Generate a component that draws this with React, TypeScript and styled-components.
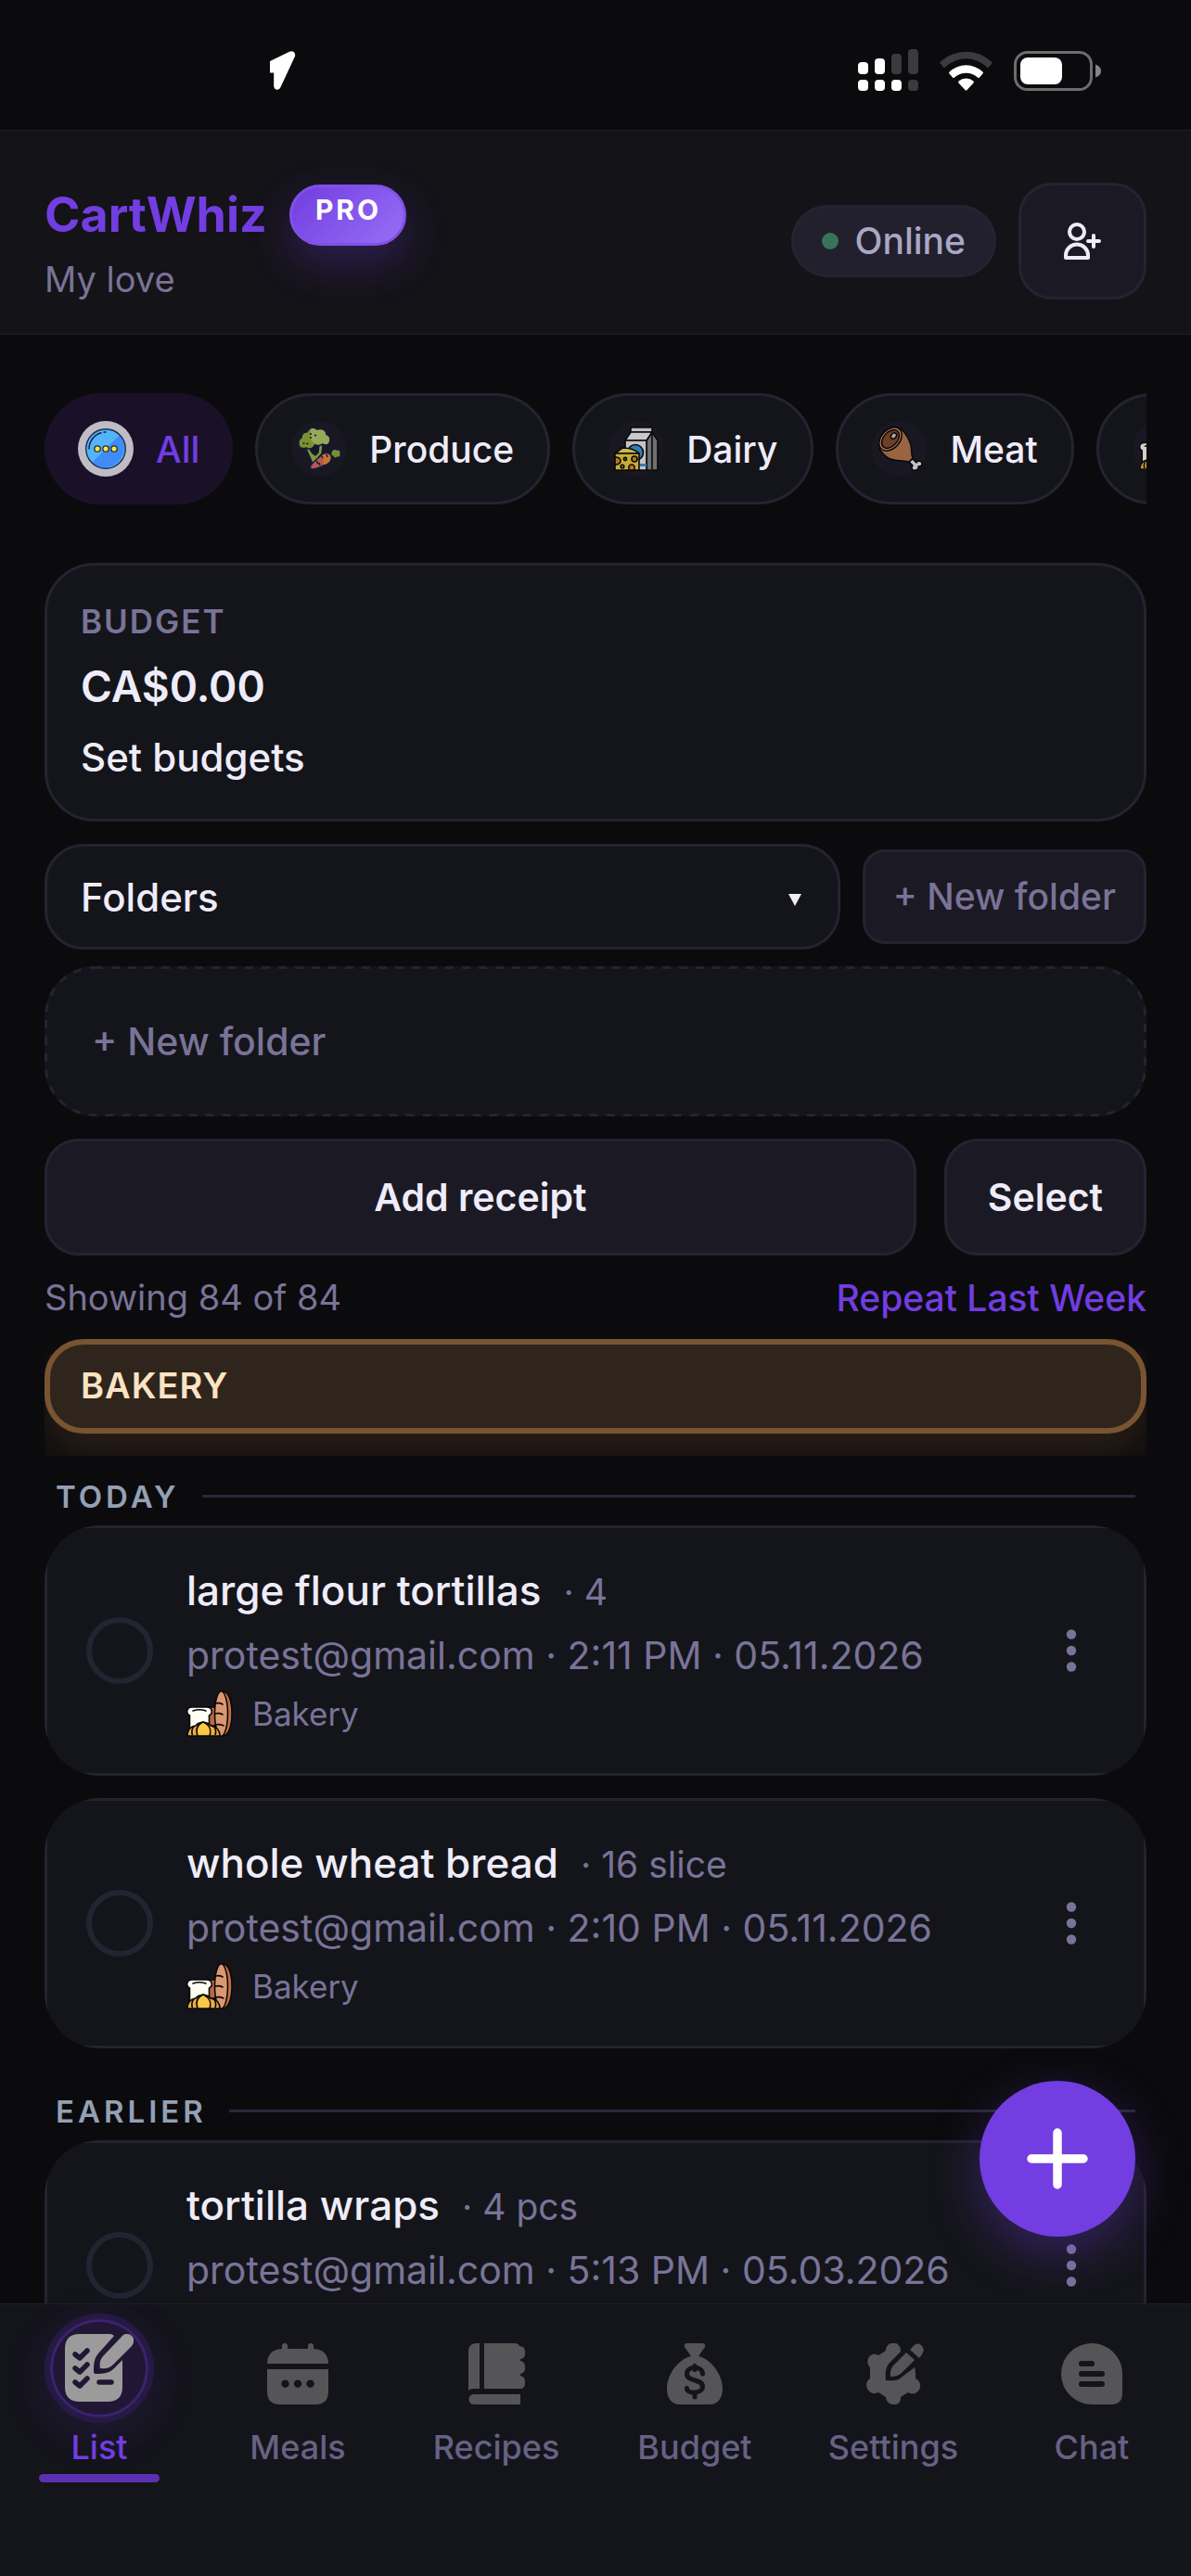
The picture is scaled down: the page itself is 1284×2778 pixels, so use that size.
import React, { useState } from "react";
import styled, { createGlobalStyle, css } from "styled-components";

const colors = {
	page: "#0b0b0d",
	header: "#141318",
	panel: "#14151a",
	raised: "#1b1a24",
	border: "#242331",
	hairline: "#1d1c29",
	text: "#efecf9",
	muted: "#7a7398",
	accent: "#723de1",
};

const GlobalStyle = createGlobalStyle`
	* {
		box-sizing: border-box;
	}
	body {
		margin: 0;
		background: ${colors.page};
		color: ${colors.text};
		font-family: Inter, "Liberation Sans", sans-serif;
		font-size: 40px;
	}
	button, select, input {
		margin: 0;
		color: inherit;
		font: inherit;
	}
	a {
		color: inherit;
		text-decoration: none;
	}
	svg {
		display: block;
		flex: none;
	}
`;

const Shell = styled.div`
	position: relative;
	display: flex;
	flex-direction: column;
	height: 100vh;
	overflow: hidden;
`;

const StatusBar = styled.div`
	display: flex;
	flex: none;
	align-items: center;
	justify-content: space-between;
	height: 140px;
	padding: 12px 96px 0 290px;
`;

const StatusIcons = styled.div`
	display: flex;
	align-items: center;
	gap: 23px;
`;

const Header = styled.header`
	display: flex;
	flex: none;
	align-items: center;
	justify-content: space-between;
	height: 221px;
	padding: 18px 48px 0;
	background: ${colors.header};
	border-top: 1px solid ${colors.hairline};
	border-bottom: 1px solid ${colors.hairline};
`;

const Brand = styled.div`
	display: flex;
	align-items: center;
	gap: 24px;
`;

const Title = styled.h1`
	margin: 0;
	color: ${colors.accent};
	font-size: 52px;
	font-weight: 700;
	line-height: 66px;
`;

const ProBadge = styled.span`
	height: 66px;
	padding: 6px 24px 0 25px;
	background: linear-gradient(135deg, #723de1, #966ff5);
	border: 3px solid #8051e8;
	border-radius: 33px;
	box-shadow: 0 18px 48px rgba(114, 61, 225, 0.3);
	color: #fff;
	font-size: 30px;
	font-weight: 700;
	letter-spacing: 3px;
	line-height: 36px;
`;

const ListName = styled.p`
	margin: 16px 0 0;
	color: ${colors.muted};
	font-size: 38px;
	line-height: 40px;
`;

const HeaderActions = styled.div`
	display: flex;
	align-items: center;
	gap: 24px;
`;

const OnlinePill = styled.div`
	display: flex;
	align-items: center;
	gap: 18px;
	height: 78px;
	padding: 0 30px;
	background: #21202c;
	border: 3px solid ${colors.border};
	border-radius: 39px;
	color: #aaa6c6;
	font-size: 39px;
	font-weight: 500;
`;

const OnlineDot = styled.span`
	width: 18px;
	height: 18px;
	background: #38735a;
	border-radius: 50%;
`;

const InviteButton = styled.button`
	display: flex;
	align-items: center;
	justify-content: center;
	width: 138px;
	height: 126px;
	padding: 0;
	background: ${colors.raised};
	border: 3px solid ${colors.border};
	border-radius: 36px;
`;

const Main = styled.main`
	display: flex;
	flex: 1;
	flex-direction: column;
	min-height: 0;
	overflow: hidden;
	padding: 63px 48px 0;

	> * {
		flex: none;
	}
`;

const Chips = styled.div`
	display: flex;
	gap: 24px;
	margin-bottom: 63px;
	overflow: hidden;
`;

const Chip = styled.button<{ $active: boolean }>`
	display: flex;
	flex: none;
	align-items: center;
	gap: 24px;
	height: 120px;
	padding: 0 36px;
	background: ${colors.panel};
	border: 3px solid ${colors.border};
	border-radius: 60px;
	font-size: 39px;
	font-weight: 500;

	${({ $active }) =>
		$active &&
		css`
			background: #1a1129;
			border: 0;
			color: ${colors.accent};
		`}
`;

const ChipIcon = styled.span<{ $active: boolean }>`
	display: flex;
	align-items: center;
	justify-content: center;
	width: 60px;
	height: 60px;
	background: ${({ $active }) => ($active ? "#c0bcc6" : "#191822")};
	border-radius: 50%;
`;

const BudgetCard = styled.section`
	height: 279px;
	margin-bottom: 24px;
	padding: 33px 36px;
	background: ${colors.panel};
	border: 3px solid ${colors.border};
	border-radius: 54px;
`;

const BudgetLabel = styled.h2`
	margin: 0;
	color: ${colors.muted};
	font-size: 35px;
	font-weight: 600;
	letter-spacing: 2px;
	line-height: 54px;
`;

const BudgetAmount = styled.p`
	margin: 0;
	font-size: 46px;
	font-weight: 600;
	line-height: 86px;
`;

const BudgetLink = styled.button`
	padding: 0;
	background: none;
	border: 0;
	font-size: 42px;
	font-weight: 500;
	line-height: 68px;
`;

const FolderRow = styled.div`
	display: flex;
	align-items: center;
	gap: 24px;
	margin-bottom: 18px;
`;

const FolderPicker = styled.label`
	position: relative;
	flex: 1;
`;

const FolderSelect = styled.select`
	display: block;
	width: 100%;
	height: 114px;
	padding: 0 36px;
	appearance: none;
	background: ${colors.panel};
	border: 3px solid ${colors.border};
	border-radius: 42px;
	font-size: 42px;
	font-weight: 500;
`;

const Caret = styled.span`
	position: absolute;
	top: 54px;
	right: 42px;
	border: solid transparent;
	border-width: 13px 7px 0;
	border-top-color: ${colors.text};
`;

const NewFolderButton = styled.button`
	height: 102px;
	padding: 0 30px 2px;
	background: ${colors.raised};
	border: 3px solid ${colors.border};
	border-radius: 24px;
	color: ${colors.muted};
	font-size: 39px;
	font-weight: 500;
`;

const NewFolderDrop = styled.button`
	position: relative;
	height: 162px;
	margin-bottom: 24px;
	padding: 0 51px;
	background: ${colors.panel};
	border: 0;
	border-radius: 54px;
	color: ${colors.muted};
	font-size: 41px;
	font-weight: 500;
	text-align: left;
`;

const DashedOutline = styled.svg`
	position: absolute;
	inset: 0;
	width: 100%;
	height: 100%;
	overflow: visible;
	fill: none;
	stroke: ${colors.border};
	stroke-width: 3px;
	stroke-dasharray: 9 9;

	rect {
		width: calc(100% - 3px);
		height: calc(100% - 3px);
	}
`;

const ActionRow = styled.div`
	display: flex;
	gap: 30px;
`;

const ActionButton = styled.button<{ $grow?: boolean }>`
	flex: ${({ $grow }) => ($grow ? "1" : "none")};
	height: 126px;
	padding: 0 44px;
	background: ${colors.raised};
	border: 3px solid ${colors.border};
	border-radius: 36px;
	font-size: 41px;
	font-weight: 600;
`;

const SummaryRow = styled.div`
	display: flex;
	align-items: center;
	justify-content: space-between;
	height: 90px;
	color: ${colors.muted};
	font-size: 38px;
`;

const RepeatButton = styled.button`
	padding: 0;
	background: none;
	border: 0;
	color: ${colors.accent};
	font-size: 39px;
	font-weight: 500;
`;

// The glow under the heading is cut off at the edges of this strip
const CategoryStrip = styled.div`
	overflow: hidden;
	padding-bottom: 24px;
`;

const CategoryHeading = styled.h2`
	margin: 0;
	padding: 0 33px 2px;
	background: #30251c;
	border: 6px solid #785530;
	border-radius: 42px;
	box-shadow: 0 24px 48px rgba(120, 80, 50, 0.3);
	color: #fbe3c3;
	font-size: 38px;
	font-weight: 600;
	letter-spacing: 1px;
	line-height: 88px;
`;

const DayHeading = styled.h3`
	display: flex;
	align-items: center;
	gap: 24px;
	height: 63px;
	margin: 12px 12px 0;
	color: #94a0b4;
	font-size: 33px;
	font-weight: 600;
	letter-spacing: 4px;

	&::after {
		content: "";
		flex: 1;
		height: 3px;
		background: #252a38;
	}
`;

const Items = styled.ul`
	margin: 0;
	padding: 0;
	list-style: none;
`;

const ItemClip = styled.li`
	margin-bottom: 24px;
	overflow: hidden;
	border-radius: 60px;
`;

const ItemCard = styled.div`
	display: flex;
	align-items: center;
	gap: 36px;
	height: 270px;
	padding: 0 42px;
	background: ${colors.panel};
	border: 3px solid ${colors.border};
	border-radius: 42px;
`;

const Tick = styled.input`
	flex: none;
	width: 72px;
	height: 72px;
	appearance: none;
	border: 6px solid ${colors.border};
	border-radius: 50%;

	&:checked {
		background: ${colors.accent};
	}
`;

const ItemBody = styled.div`
	flex: 1;
	padding-bottom: 2px;
	color: ${colors.muted};
	white-space: nowrap;
`;

const ItemTitle = styled.div`
	display: flex;
	align-items: baseline;
	gap: 24px;
	font-size: 39px;
	line-height: 62px;
`;

const ItemName = styled.span`
	color: ${colors.text};
	font-size: 44px;
	font-weight: 500;
`;

const ItemMeta = styled.div`
	font-size: 41px;
	line-height: 74px;
`;

const ItemCategory = styled.div`
	display: flex;
	align-items: center;
	gap: 21px;
	font-size: 35px;
	line-height: 52px;
`;

const MoreButton = styled.button`
	display: flex;
	align-items: center;
	justify-content: center;
	flex: none;
	width: 72px;
	height: 72px;
	padding: 0;
	background: none;
	border: 0;
`;

const Nav = styled.nav`
	display: grid;
	flex: none;
	grid-template-columns: repeat(6, 1fr);
	height: 294px;
	background: #14141b;
	border-top: 1px solid #1f1e2b;
`;

const NavLink = styled.a<{ $active: boolean }>`
	display: flex;
	flex-direction: column;
	align-items: center;
	color: ${({ $active }) => ($active ? colors.accent : "#676183")};
	font-size: 36px;
	font-weight: 500;
	line-height: 48px;
`;

const NavIcon = styled.span<{ $active: boolean }>`
	display: flex;
	align-items: center;
	justify-content: center;
	width: 118px;
	height: 118px;
	margin: 10px 0 2px;
	padding-top: ${({ $active }) => ($active ? "0" : "12px")};
	border-radius: 50%;
	color: ${({ $active }) => ($active ? "#9b9b9b" : "#555457")};

	${({ $active }) =>
		$active &&
		css`
			background: #211735;
			border: 6px solid #261a44;
			box-shadow: inset 0 0 0 3px #3b2370, 0 12px 48px rgba(114, 61, 225, 0.15);
		`}
`;

const ActiveBar = styled.span`
	width: 130px;
	height: 9px;
	margin-top: 5px;
	background: #5b31b0;
	border-radius: 5px;
`;

const AddButton = styled.button`
	position: absolute;
	right: 60px;
	bottom: 366px;
	display: flex;
	align-items: center;
	justify-content: center;
	width: 168px;
	height: 168px;
	padding: 0;
	background: ${colors.accent};
	border: 0;
	border-radius: 50%;
	box-shadow: 0 18px 54px rgba(114, 61, 225, 0.35);
`;

const SignalIcon = () => (
	<svg width="65" height="46" viewBox="0 0 65 46" fill="#fff">
		<rect x="0" y="14" width="11" height="13" rx="4" />
		<rect x="18" y="10" width="11" height="17" rx="4" />
		<rect x="36" y="5" width="11" height="22" rx="4" fill="#3b3b3d" />
		<rect x="54" y="0" width="11" height="27" rx="4" fill="#3b3b3d" />
		<rect x="0" y="33" width="11" height="12" rx="4" />
		<rect x="18" y="33" width="11" height="12" rx="4" />
		<rect x="36" y="33" width="11" height="12" rx="4" />
		<rect x="54" y="33" width="11" height="12" rx="4" fill="#3b3b3d" />
	</svg>
);

const WifiIcon = () => (
	<svg width="57" height="43" viewBox="0 0 57 43">
		<path
			d="M0 12.5a40.5 40.5 0 0 1 57 0l-4 5a1.400 1.400 0 0 1-2 0a32 32 0 0 0-45 0a1.400 1.400 0 0 1-2 0z"
			fill="#3b3b3d"
		/>
		<path
			d="M10.500 22.500a26 26 0 0 1 36 0q1 1 0 2l-3.500 4q-1 1-2 0a18.500 18.500 0 0 0-25 0q-1 1-2 0l-3.500-4q-1-1 0-2z"
			fill="#fff"
		/>
		<path
			d="M20.500 32.500a12.500 12.500 0 0 1 16 0q.8 1 0 2l-7 7.500q-1 1-2 0l-7-7.500q-.8-1 0-2z"
			fill="#fff"
		/>
	</svg>
);

const BatteryIcon = () => (
	<svg width="95" height="43" viewBox="0 0 95 43">
		<rect
			x="1.500"
			y="1.500"
			width="82"
			height="40"
			rx="13"
			fill="none"
			stroke="#6d6d6f"
			strokeWidth="3"
		/>
		<rect x="7" y="7" width="45" height="29" rx="8" fill="#fff" />
		<path d="M88 14.500q6 2 6 7t-6 7z" fill="#858586" />
	</svg>
);

const LocationIcon = () => (
	<svg width="29" height="42" viewBox="0 0 29 42" fill="#fff">
		<path d="M1 11 22 .8c4-1.800 7 1 6 5L12.500 39c-1.500 4-7 3.500-7.300-1V23.500H1z" />
	</svg>
);

const InviteIcon = () => (
	<svg
		width="40"
		height="40"
		viewBox="0 0 40 40"
		fill="none"
		stroke="#efecf9"
		strokeWidth="4"
		strokeLinecap="round"
		strokeLinejoin="round"
	>
		<circle cx="14" cy="10" r="8" />
		<path d="M2 38v-2.500a12 12 0 0 1 24 0V38z" />
		<path d="M32 14v12M26 20h12" />
	</svg>
);

const AllIcon = () => (
	<svg width="60" height="60" viewBox="0 0 60 60">
		<circle cx="30" cy="30" r="21.300" fill="#54b4fa" />
		<path d="M45 15a21.300 21.300 0 0 1-30 30z" fill="#3f8cf8" />
		<circle cx="30" cy="30" r="21.300" fill="none" stroke="#1c2c48" strokeWidth="1.400" />
		<path
			d="M12 30a18 18 0 0 1 13-17.300M28 12h2"
			fill="none"
			stroke="#152246"
			strokeWidth="1.500"
			strokeLinecap="round"
		/>
		<g fill="#fbe74c" stroke="#2b2a22" strokeWidth="1.300">
			<circle cx="21" cy="30" r="3.200" />
			<circle cx="30" cy="30" r="3.200" />
			<circle cx="39" cy="30" r="3.200" />
		</g>
	</svg>
);

const ProduceIcon = () => (
	<svg
		width="60"
		height="60"
		viewBox="0 0 60 60"
		stroke="#101b42"
		strokeWidth="1.500"
		strokeLinejoin="round"
	>
		<path d="M19 29l4 6 3 2 3-3 1-8h4l-1 9-5 6-1 3-4 2-3-7-4-9z" fill="#7f9b36" />
		<path
			d="M9 28c-2-4-1-8 2-10 0-5 3-6 6-6 2-5 8-6 11-2 5-2 10 1 9 5 5 1 5 6 3 9-2 2-5 1-6 0-3 2-6 2-8 1-2 5-6 6-10 4-3 1-5 1-7-1z"
			fill="#7c922f"
		/>
		<path
			d="M21 8.500c3-1.500 5 0 7 1.500 5-2 10 1 9 5 5 1 5 6 3 9-2 2-5 1-6 0-3 2-6 2-8 1l-5-5z"
			fill="#96a957"
			stroke="none"
		/>
		<path
			d="M43 34c0-3 4-5 6-3 3-1 5 2 4 4 1 3-1 5-3 4-2 2-5 1-5-1-2 0-3-2-2-4z"
			fill="#788f2c"
		/>
		<path
			d="M21 48c2-3 6-7 13-12 4-2 9-1 9 3 1 5-4 8-8 9-4 2-8 4-12 4-3 0-3-2-2-4z"
			fill="#b5574a"
		/>
		<path d="M33 37c5-3 9-2 9.500 2 .5 4-3 7-7.500 8l-1-4 1-3z" fill="#c4752c" stroke="none" />
		<path d="M27 43l2 3M31 48l-1-3M38 36l1 3M33 38l1 2" fill="none" />
		<g fill="#101b42" stroke="none">
			<circle cx="21" cy="14" r="1.100" />
			<circle cx="21" cy="18" r="1.100" />
			<circle cx="26" cy="15.500" r="1.100" />
			<circle cx="13.500" cy="24" r="1.100" />
			<circle cx="17.500" cy="24.500" r="1.100" />
		</g>
	</svg>
);

const DairyIcon = () => (
	<svg
		width="60"
		height="60"
		viewBox="0 0 60 60"
		stroke="#08080a"
		strokeWidth="1.600"
		strokeLinejoin="round"
	>
		<path d="M41 21l6-9 6 9v32H41z" fill="#6e7072" />
		<path d="M47 12v40" fill="none" />
		<path d="M24 7h23v5H24z" fill="#bfbfc1" />
		<path d="M24 12h23l-6 9H18z" fill="#c8c8ca" />
		<path d="M18 21h23v32H18z" fill="#c4c4c6" />
		<path d="M34 46h7v3h-7z" fill="#347db0" stroke="none" />
		<circle cx="29" cy="34" r="8.500" fill="#347db0" />
		<path d="M7 35l8-6q12 0 18 6z" fill="#c9bb4b" />
		<path d="M7 35h26v18H7z" fill="#c6ae34" />
		<g fill="#b5761f">
			<path d="M7 39q6 0 6 4t-6 4z" />
			<circle cx="28" cy="41" r="3" />
			<circle cx="18" cy="41" r="1.600" />
			<circle cx="15" cy="49" r="1.800" />
			<path d="M22 53q-1-6 3-6t3 6z" />
		</g>
	</svg>
);

const MeatIcon = () => (
	<svg
		width="60"
		height="60"
		viewBox="0 0 60 60"
		stroke="#08080a"
		strokeWidth="1.500"
		strokeLinejoin="round"
	>
		<path
			d="M40 44l4-3 4 4c1-3 6-2 6 1 0 2-2 3-4 3 1 4-6 6-7 2 0-2 1-3 1-3z"
			fill="#c3c1c3"
		/>
		<path d="M8 30c4 6 9 12 16 12 6 1 12 1 16 2l4-4c-2-5-1-8-2-14-2-7-6-13-11-18z" fill="#9b6440" />
		<ellipse cx="20" cy="19.500" rx="10" ry="14.500" transform="rotate(42 20 19.500)" fill="#b37c5b" />
		<ellipse cx="20" cy="19.500" rx="7.500" ry="11.500" transform="rotate(42 20 19.500)" fill="#6d3f24" />
		<ellipse cx="23.500" cy="16" rx="2.600" ry="3.500" transform="rotate(42 23.500 16)" fill="#b9a99c" />
	</svg>
);

const BakeryIcon = ({ size = 50, opacity = 1 }: { size?: number; opacity?: number }) => (
	<svg
		width={size}
		height={size}
		viewBox="0 0 50 50"
		opacity={opacity}
		stroke="#0a0806"
		strokeWidth="1.600"
		strokeLinejoin="round"
	>
		<path d="M22 18h11v20H22z" fill="#b86b43" />
		<path d="M39 1c7 0 10 12 10 24s-3 23-9 24z" fill="#c27149" />
		<ellipse cx="37.500" cy="25" rx="7" ry="24.200" fill="#d99873" />
		<path d="M31 14q5-1 8 1M31 25q5-1 8 1M31 37q5-1 9 1" fill="none" strokeLinecap="round" />
		<path
			d="M6 18h16c6 0 7 7 2.500 9v16H3.500V27C-1 25 0 18 6 18z"
			fill="#fffdf4"
		/>
		<path d="M7 22q7-2.500 14 0" fill="none" strokeLinecap="round" />
		<path d="M1 49c0-6 3-10 9-11q2-3 8-4 6 1 8 4c6 1 10 5 10 11z" fill="#eab042" />
		<path d="M12 49c-2-6-1-12 6-15 7 3 9 9 7 15z" fill="#f8c945" />
		<path d="M6.500 48q-2-5 2-10M31 48q2-5-2-10" fill="none" />
	</svg>
);

const MoreIcon = () => (
	<svg width="12" height="46" viewBox="0 0 12 46" fill={colors.muted}>
		<circle cx="6" cy="5.500" r="5.200" />
		<circle cx="6" cy="23" r="5.200" />
		<circle cx="6" cy="40.500" r="5.200" />
	</svg>
);

const PlusIcon = () => (
	<svg width="66" height="66" viewBox="0 0 66 66" stroke="#fff" strokeWidth="9.500" strokeLinecap="round">
		<path d="M33 5v56M5 33h56" />
	</svg>
);

const ListIcon = () => (
	<svg width="74" height="74" viewBox="0 0 74 74">
		<path
			d="M16 0h32c3 0 5 2 5 2L36 21c-4 5-5 9-5 20q0 2 2 2c9 0 15-1 19-5l10-10v29q0 16-16 16H16Q0 73 0 57V16Q0 0 16 0z"
			fill="currentColor"
		/>
		<path
			d="M61 3c3-4 8-4 11-1s3 7 0 11L52 33c-4 4-8 5-14 4-1-6 0-10 4-14z"
			fill="currentColor"
		/>
		<g
			fill="none"
			stroke="#211735"
			strokeWidth="5.500"
			strokeLinecap="round"
			strokeLinejoin="round"
		>
			<path d="M11 22l5 4 8-8M11 37l5 4 8-8M11 52l5 4 8-8M37 52h13" />
		</g>
	</svg>
);

const MealsIcon = () => (
	<svg width="66" height="66" viewBox="0 0 66 66" fill="currentColor">
		<path d="M16 6V3a3 3 0 0 1 6 0v3h22V3a3 3 0 0 1 6 0v3q16 1 16 16H0Q0 7 16 6z" />
		<path
			fillRule="evenodd"
			d="M0 28h66v24q0 14-14 14H14Q0 66 0 52zM19.500 39.500a4.200 4.200 0 1 0 .1 0zM33 39.500a4.200 4.200 0 1 0 .1 0zM46.500 39.500a4.200 4.200 0 1 0 .1 0z"
		/>
	</svg>
);

const RecipesIcon = () => (
	<svg width="66" height="66" viewBox="0 0 66 66" fill="currentColor">
		<path d="M3 9q0-9 9-9h3v49H9q-4 0-6 2z" />
		<path d="M20 0h33q4 0 5 3 6 0 6 6v3q0 4-5 5v2q5 1 5 6v2q0 5-5 6v2q5 1 5 6v2q0 6-5 6H20z" />
		<path d="M9 55h50v11H9a5.500 5.500 0 0 1 0-11z" />
	</svg>
);

const BudgetIcon = () => (
	<svg width="66" height="66" viewBox="0 0 66 66">
		<path
			d="M25 0h16q4 0 3 4l-7 10c14 3 26 20 26 35 0 10-5 17-14 17H17C8 66 3 59 3 49c0-15 12-32 26-35L22 4q-1-4 3-4z"
			fill="currentColor"
		/>
		<path
			d="M41.500 33c0-9-17-9-17 0 0 9 17 5 17 13.500 0 8.500-17 8.500-17 2M33 24.500v4M33 53v5"
			fill="none"
			stroke="#14141b"
			strokeWidth="5"
			strokeLinecap="round"
		/>
	</svg>
);

const SettingsIcon = () => (
	<svg width="66" height="66" viewBox="0 0 66 66" fill="currentColor">
		<path d="M25 8a8 8 0 0 1 16-1v2L30 20c-5 5-6 11-5 20 9 1 14 0 19-5l12-9c1 3 1 8 1 12 10 5 4 19-6 16l-2-1-8 5c1 11-15 11-16 0l-8-5c-10 5-18-9-9-15V26C2 20 7 8 17 13z" />
		<path d="M47 10l9 8-14 14q-4 4-12 4-1-8 4-13zM53 5q5-7 10-3t1 10l-3 4-10-9z" />
	</svg>
);

const ChatIcon = () => (
	<svg width="66" height="66" viewBox="0 0 66 66">
		<path d="M33 0c18 0 33 15 33 33v21q0 12-12 12H33a33 33 0 0 1 0-66z" fill="currentColor" />
		<path
			d="M22 22h11M22 33h22M22 44h22"
			stroke="#14141b"
			strokeWidth="6"
			strokeLinecap="round"
		/>
	</svg>
);

const categories = [
	{ name: "All", icon: <AllIcon /> },
	{ name: "Produce", icon: <ProduceIcon /> },
	{ name: "Dairy", icon: <DairyIcon /> },
	{ name: "Meat", icon: <MeatIcon /> },
	{ name: "Bakery", icon: <BakeryIcon size={46} opacity={0.8} /> },
];

const tabs = [
	{ name: "List", icon: <ListIcon /> },
	{ name: "Meals", icon: <MealsIcon /> },
	{ name: "Recipes", icon: <RecipesIcon /> },
	{ name: "Budget", icon: <BudgetIcon /> },
	{ name: "Settings", icon: <SettingsIcon /> },
	{ name: "Chat", icon: <ChatIcon /> },
];

interface Item {
	name: string;
	amount: string;
	time: string;
	date: string;
}

const today: Item[] = [
	{ name: "large flour tortillas", amount: "4", time: "2:11 PM", date: "05.11.2026" },
	{ name: "whole wheat bread", amount: "16 slice", time: "2:10 PM", date: "05.11.2026" },
];

const earlier: Item[] = [
	{ name: "tortilla wraps", amount: "4 pcs", time: "5:13 PM", date: "05.03.2026" },
];

const ItemList: React.FC<{ items: Item[] }> = ({ items }) => (
	<Items>
		{items.map((item) => (
			<ItemClip key={item.name}>
				<ItemCard>
					<Tick type="checkbox" aria-label={item.name} />
					<ItemBody>
						<ItemTitle>
							<ItemName>{item.name}</ItemName>
							<span>· {item.amount}</span>
						</ItemTitle>
						<ItemMeta>
							protest@gmail.com · {item.time} · {item.date}
						</ItemMeta>
						<ItemCategory>
							<BakeryIcon />
							Bakery
						</ItemCategory>
					</ItemBody>
					<MoreButton aria-label="More">
						<MoreIcon />
					</MoreButton>
				</ItemCard>
			</ItemClip>
		))}
	</Items>
);

const App: React.FC = () => {
	const [category, setCategory] = useState("All");

	return (
		<Shell>
			<GlobalStyle />
			<StatusBar>
				<LocationIcon />
				<StatusIcons>
					<SignalIcon />
					<WifiIcon />
					<BatteryIcon />
				</StatusIcons>
			</StatusBar>
			<Header>
				<div>
					<Brand>
						<Title>CartWhiz</Title>
						<ProBadge>PRO</ProBadge>
					</Brand>
					<ListName>My love</ListName>
				</div>
				<HeaderActions>
					<OnlinePill>
						<OnlineDot />
						Online
					</OnlinePill>
					<InviteButton aria-label="Invite">
						<InviteIcon />
					</InviteButton>
				</HeaderActions>
			</Header>
			<Main>
				<Chips>
					{categories.map(({ name, icon }) => (
						<Chip
							key={name}
							$active={name === category}
							onClick={() => setCategory(name)}
						>
							<ChipIcon $active={name === category}>{icon}</ChipIcon>
							{name}
						</Chip>
					))}
				</Chips>
				<BudgetCard>
					<BudgetLabel>BUDGET</BudgetLabel>
					<BudgetAmount>CA$0.00</BudgetAmount>
					<BudgetLink>Set budgets</BudgetLink>
				</BudgetCard>
				<FolderRow>
					<FolderPicker>
						<FolderSelect aria-label="Folders">
							<option>Folders</option>
						</FolderSelect>
						<Caret />
					</FolderPicker>
					<NewFolderButton>+ New folder</NewFolderButton>
				</FolderRow>
				<NewFolderDrop>
					<DashedOutline>
						<rect x="1.500" y="1.500" rx="52.500" />
					</DashedOutline>
					+ New folder
				</NewFolderDrop>
				<ActionRow>
					<ActionButton $grow>Add receipt</ActionButton>
					<ActionButton>Select</ActionButton>
				</ActionRow>
				<SummaryRow>
					<span>Showing 84 of 84</span>
					<RepeatButton>Repeat Last Week</RepeatButton>
				</SummaryRow>
				<CategoryStrip>
					<CategoryHeading>BAKERY</CategoryHeading>
				</CategoryStrip>
				<DayHeading>TODAY</DayHeading>
				<ItemList items={today} />
				<DayHeading>EARLIER</DayHeading>
				<ItemList items={earlier} />
			</Main>
			<Nav>
				{tabs.map(({ name, icon }, index) => (
					<NavLink key={name} href={`#${name.toLowerCase()}`} $active={index === 0}>
						<NavIcon $active={index === 0}>{icon}</NavIcon>
						{name}
						{index === 0 && <ActiveBar />}
					</NavLink>
				))}
			</Nav>
			<AddButton aria-label="Add item">
				<PlusIcon />
			</AddButton>
		</Shell>
	);
};

export default App;
